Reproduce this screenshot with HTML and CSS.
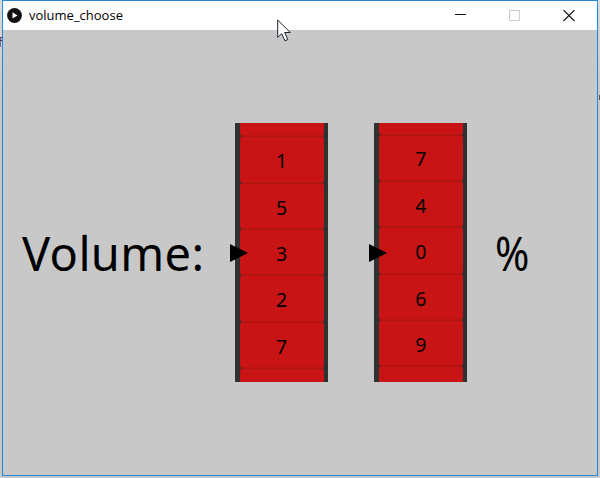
FILE: index.html
```
<!DOCTYPE html>
<html lang="en">
<head>
<meta charset="utf-8">
<title>volume_choose</title>
<link rel="stylesheet" href="styles.css">
</head>
<body>
<div class="backdrop">
  <span class="behind behind-left">f</span>
  <i class="behind behind-right"></i>
  <main class="window">
    <header class="titlebar">
      <svg class="app-icon" width="15" height="15" viewBox="0 0 15 15"><circle cx="7.5" cy="7.5" r="7.4" fill="#111"/><path d="M5.5 4.2v6.4l5-3.2z" fill="#fff"/></svg>
      <h1 class="title">volume_choose</h1>
      <div class="controls">
        <svg width="12" height="12" viewBox="0 0 12 12"><path d="M0 4.5h11" stroke="#111"/></svg>
        <svg width="12" height="12" viewBox="0 0 12 12"><path d="M.5.5h10v10H.5z" fill="none" stroke="#ccc"/></svg>
        <svg width="12" height="12" viewBox="0 0 12 12"><path d="M.5 0l11 11M11.5 0l-11 11" stroke="#111" stroke-width="1.1"/></svg>
      </div>
    </header>
    <section class="canvas">
      <div class="label">Volume:</div>
      <div class="slot">
        <div class="reel reel-tens">
          <div class="cell"></div><div class="cell">1</div><div class="cell">5</div><div class="cell">3</div><div class="cell">2</div><div class="cell">7</div><div class="cell"></div>
        </div>
        <svg class="pointer" width="18" height="18" viewBox="0 0 18 18"><path d="M0 0l18 9-18 9z"/></svg>
      </div>
      <div class="slot">
        <div class="reel reel-ones">
          <div class="cell"></div><div class="cell">7</div><div class="cell">4</div><div class="cell">0</div><div class="cell">6</div><div class="cell">9</div><div class="cell"></div>
        </div>
        <svg class="pointer" width="18" height="18" viewBox="0 0 18 18"><path d="M0 0l18 9-18 9z"/></svg>
      </div>
      <div class="percent">%</div>
    </section>
  </main>
  <svg class="cursor" width="15" height="24" viewBox="0 0 15 24"><path d="M.7 1v17.4l4-3.8 3.3 7.2 2.8-1.3-3.2-7h5.7z" fill="#fff" stroke="#1c2230" stroke-width="1"/></svg>
</div>
</body>
</html>
```
FILE: styles.css
```
* { box-sizing: border-box; }
body {
  margin: 0;
  font-family: "Noto Sans", "Open Sans", sans-serif;
  color: #000;
}
.backdrop {
  position: relative;
  width: 600px;
  height: 478px;
  padding: 0 2px 2px;
  overflow: hidden;
  background: linear-gradient(#d8dde2, #c3c8cc 20%, #c5c9cc);
}
.behind { position: absolute; }
.behind-left {
  left: -2px;
  top: 33px;
  font-size: 13px;
  line-height: 18px;
  color: #552b48;
}
.behind-right {
  right: 0;
  top: 95px;
  width: 1px;
  height: 5px;
  background: #555;
}
.window {
  position: relative;
  height: 476px;
  border: 1px solid #2a86d3;
  background: #c8c8c8;
}
.titlebar {
  display: flex;
  align-items: center;
  height: 29px;
  padding: 0 22px 0 4px;
  background: #fff;
}
.title {
  margin: 0 0 2px 7px;
  font: 13px/16px "Open Sans", sans-serif;
}
.controls {
  display: flex;
  gap: 42px;
  margin-left: auto;
}
.controls svg { display: block; }
.canvas {
  display: grid;
  grid-template-columns: 232px 93px 139.4px 1fr;
  padding-top: 92.5px;
}
.label {
  height: 259.5px;
  padding-left: 19px;
  font-size: 47px;
  line-height: 260px;
  letter-spacing: 0.35px;
  white-space: nowrap;
}
.slot {
  position: relative;
  width: 93px;
  height: 259.5px;
}
.slot + .slot { margin-left: 46.4px; }
.reel {
  height: 259.5px;
  padding: 0 4.5px;
  overflow: hidden;
  background: #303232;
}
.cell {
  display: flex;
  align-items: center;
  justify-content: center;
  height: 46.4px;
  padding-top: 3px;
  border-radius: 3px;
  background: #c81414;
  box-shadow: inset 0 0.7px #a51717, inset 0 -0.7px #b51616;
  font-size: 19.5px;
  line-height: 1;
}
.reel-tens .cell:first-child { margin-top: -32.6px; }
.reel-ones .cell:first-child { margin-top: -34.4px; }
.pointer {
  position: absolute;
  left: -5px;
  top: 121px;
}
.percent {
  margin-left: 28px;
  font-size: 47px;
  line-height: 260px;
  transform: scaleX(0.88);
  transform-origin: 0 50%;
}
.cursor {
  position: absolute;
  left: 277px;
  top: 19px;
}
```
